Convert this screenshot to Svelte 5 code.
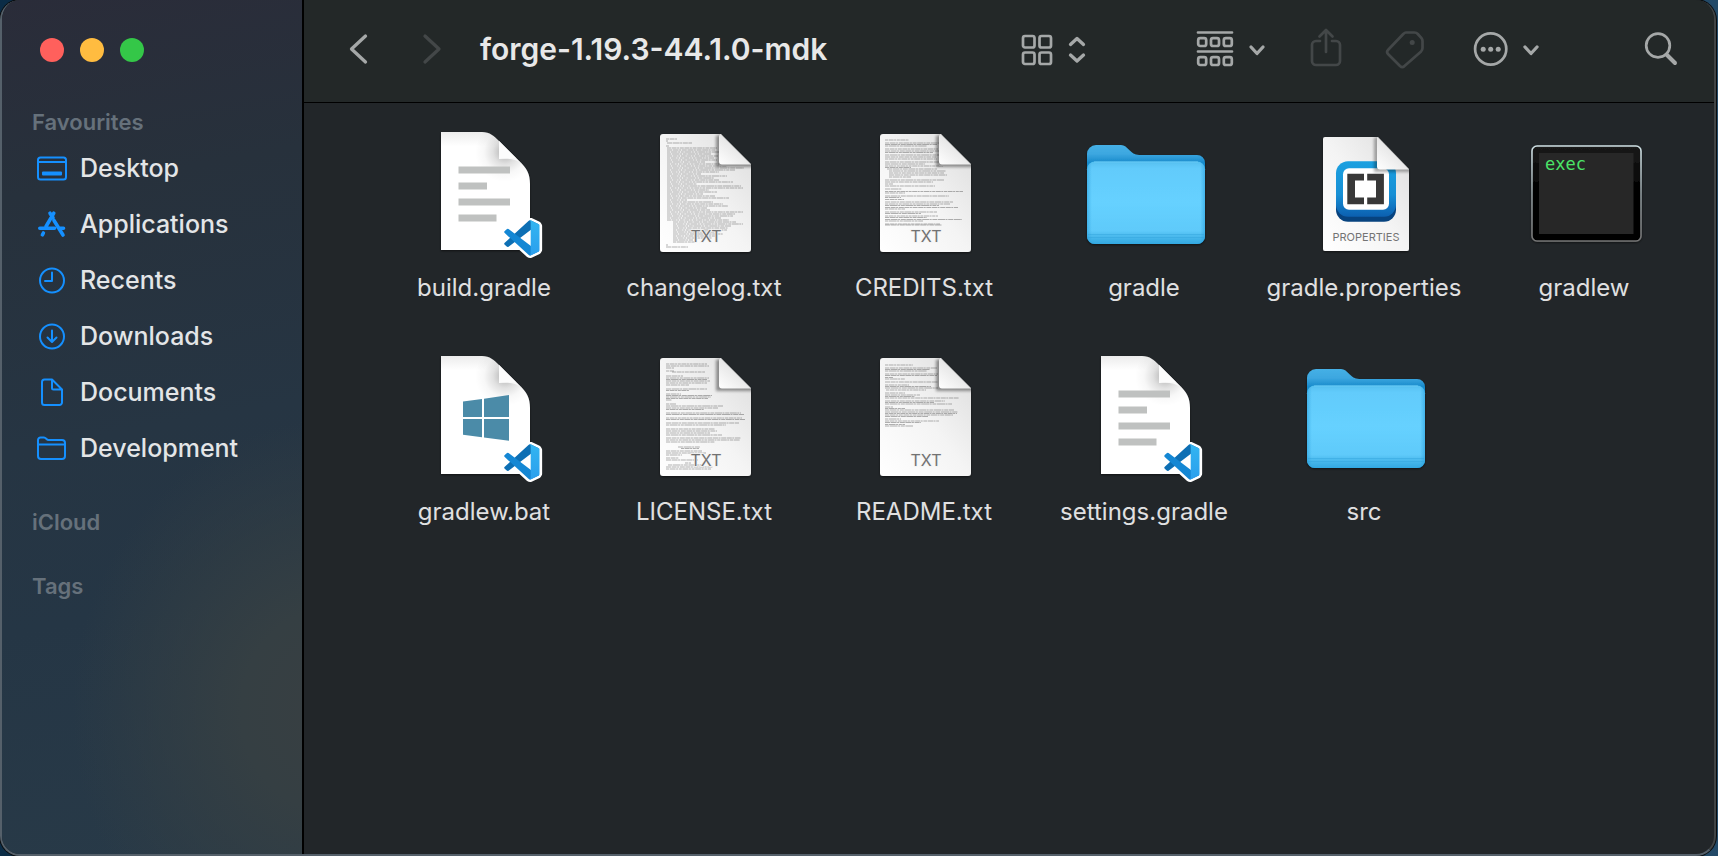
<script>
  const places = [
    { name: 'Desktop', icon: 'desktop' },
    { name: 'Applications', icon: 'apps' },
    { name: 'Recents', icon: 'clock' },
    { name: 'Downloads', icon: 'download' },
    { name: 'Documents', icon: 'doc' },
    { name: 'Development', icon: 'folder' }
  ];

  // Rows of miniature text on a page preview: [y, x, width], in icon units
  const changelog = [
    [11, 26, 11], [13, 26, 2], [15, 27, 25], [18, 26, 3],
    ...Array.from({ length: 25 }, (_, i) => [20 + i * 2, 27, [50, 48, 52, 44, 51, 47, 50, 38, 52, 60, 77, 68, 52, 34, 60, 47, 52, 66, 30, 74, 76, 42, 50, 36, 48][i]]),
    ...Array.from({ length: 12 }, (_, i) => [70 + i * 2, 27, [62, 20, 46, 56, 61, 40, 43, 76, 68, 66, 54, 62][i]]),
    ...Array.from({ length: 11 }, (_, i) => [94 + i * 2, 33, [63, 70, 58, 55, 54, 42, 50, 42, 39, 20, 22][i]]),
    [117, 26, 2], [119, 26, 22]
  ];
  const credits = [
    [12, 25, 24], [15, 25, 54], [16.5, 25, 52], [18, 25, 42], [21, 25, 53], [23, 25, 54], [24.5, 25, 48],
    [27, 25, 54], [29, 25, 51], [31, 25, 52], [34, 25, 54], [36, 25, 40], [38, 25, 58], [39.5, 25, 26], [41, 27, 50],
    [43, 29, 57], [45, 29, 55], [47, 29, 58], [49, 29, 22], [52, 25, 59], [54, 25, 48], [56, 25, 8], [58, 25, 50],
    [61, 25, 17], [63.5, 25, 78], [65, 25, 20], [68, 25, 64], [69.5, 25, 16], [71.5, 25, 19],
    [74, 25, 68], [76, 25, 65], [77.5, 25, 54], [79.5, 25, 73], [81, 25, 20], [84, 25, 52], [85.5, 25, 36],
    [88, 25, 53], [89.5, 25, 42], [91.5, 25, 77], [93, 25, 38], [96, 25, 55], [97, 25, 57]
  ];
  const license = [
    [12, 26, 41], [14, 26, 43], [16, 26, 8], [19, 26, 8], [20, 32, 33], [24, 26, 17], [26, 26, 43], [27.5, 26, 41],
    [29, 26, 44], [31, 26, 41], [33, 26, 23], [37, 26, 41], [38.5, 26, 23], [42, 26, 15], [43.5, 26, 46], [45, 26, 45],
    [46.5, 26, 42], [48, 26, 6], [52, 26, 10], [54, 26, 57], [56, 26, 52], [57.5, 26, 38], [61, 26, 75], [62.5, 26, 78],
    [66, 26, 76], [67.5, 26, 79], [71, 26, 73], [73, 26, 60], [77, 26, 49], [79, 26, 51], [81, 26, 44], [83, 26, 56],
    [86, 26, 75], [88, 26, 74], [90, 26, 49], [95, 38, 22], [96.5, 41, 18], [99, 26, 36], [101, 26, 40], [103, 26, 16],
    [106, 26, 13], [108, 26, 32], [111, 45, 6], [113, 28, 34], [115, 26, 47], [117, 26, 45]
  ];
  const readme = [
    [13, 25, 28], [16, 25, 52], [17.5, 25, 45], [19, 25, 42], [22, 25, 53], [23.5, 25, 52], [25.5, 25, 8], [27, 25, 20],
    [30, 25, 53], [33, 25, 24], [34.5, 25, 46], [36, 25, 53], [38, 26, 40], [41, 25, 20], [43, 25, 35], [44.5, 25, 30],
    [46, 25, 74], [49, 25, 60], [50.5, 25, 49], [52, 25, 67], [55, 25, 8], [56.5, 25, 20], [58, 25, 69], [60, 25, 73],
    [61.5, 25, 72], [63, 25, 68], [64.5, 25, 43], [67, 25, 16], [69, 25, 54], [70.5, 25, 36], [72.5, 25, 20], [74, 25, 28]
  ];

  const files = [
    { name: 'build.gradle', kind: 'code' },
    { name: 'changelog.txt', kind: 'txt', rows: changelog },
    { name: 'CREDITS.txt', kind: 'txt', rows: credits },
    { name: 'gradle', kind: 'folder' },
    { name: 'gradle.properties', kind: 'properties' },
    { name: 'gradlew', kind: 'exec' },
    { name: 'gradlew.bat', kind: 'windows' },
    { name: 'LICENSE.txt', kind: 'txt', rows: license },
    { name: 'README.txt', kind: 'txt', rows: readme },
    { name: 'settings.gradle', kind: 'code' },
    { name: 'src', kind: 'folder' }
  ];
</script>

<svelte:head><title>forge-1.19.3-44.1.0-mdk</title></svelte:head>

<svg class="defs" aria-hidden="true">
  <defs>
    <linearGradient id="paper" x1="0" y1="1" x2="1" y2="0"><stop offset="0" stop-color="#fff" /><stop offset=".5" stop-color="#f4f4f4" /><stop offset="1" stop-color="#dcdcdc" /></linearGradient>
    <linearGradient id="flap" x1="0" y1="1" x2=".6" y2=".3"><stop offset="0" stop-color="#fff" /><stop offset="1" stop-color="#e2e2e2" /></linearGradient>
    <linearGradient id="sheet" x1="0" y1="0" x2="0" y2="1"><stop offset="0" stop-color="#ececec" /><stop offset=".12" stop-color="#fff" /><stop offset="1" stop-color="#fff" /></linearGradient>
    <radialGradient id="curl" gradientUnits="userSpaceOnUse" cx="85" cy="24" r="30"><stop offset="0" stop-color="#000" stop-opacity=".32" /><stop offset=".4" stop-color="#000" stop-opacity=".12" /><stop offset=".7" stop-color="#000" stop-opacity=".03" /><stop offset="1" stop-color="#000" stop-opacity="0" /></radialGradient>
    <linearGradient id="folder-back" x1="0" y1="0" x2="0" y2="1"><stop offset="0" stop-color="#45b0e6" /><stop offset=".09" stop-color="#3da7e0" /><stop offset=".18" stop-color="#168acb" /><stop offset="1" stop-color="#168acb" /></linearGradient>
    <linearGradient id="folder-front" x1="0" y1="0" x2="0" y2="1"><stop offset="0" stop-color="#55bfef" /><stop offset=".08" stop-color="#62cbfb" /><stop offset=".5" stop-color="#66d1ff" /><stop offset=".84" stop-color="#5fcafa" /><stop offset=".9" stop-color="#4dbbee" /><stop offset="1" stop-color="#32a8e1" /></linearGradient>
    <linearGradient id="folder-edge"><stop offset="0" stop-color="#279ddb" stop-opacity=".55" /><stop offset=".04" stop-color="#279ddb" stop-opacity="0" /><stop offset=".96" stop-color="#279ddb" stop-opacity="0" /><stop offset="1" stop-color="#279ddb" stop-opacity=".55" /></linearGradient>
    <linearGradient id="brackets" x1="0" y1="0" x2="0" y2="1"><stop offset="0" stop-color="#1ba0e0" /><stop offset=".6" stop-color="#178fd5" /><stop offset="1" stop-color="#0b5fb0" /></linearGradient>
    <linearGradient id="rim" x1="0" y1="0" x2="0" y2="1"><stop offset="0" stop-color="#cfe0e4" /><stop offset=".5" stop-color="#8d979a" /><stop offset="1" stop-color="#747474" /></linearGradient>
    <linearGradient id="bezel" x1="0" y1="0" x2="0" y2="1"><stop offset="0" stop-color="#1b1b1b" /><stop offset=".5" stop-color="#000" /><stop offset="1" stop-color="#000" /></linearGradient>
    <linearGradient id="code-right" x1="0" y1="0" x2="0" y2="1"><stop offset="0" stop-color="#32b5f1" /><stop offset="1" stop-color="#2b9fed" /></linearGradient>
    <filter id="drop" x="-10%" y="-10%" width="120%" height="125%"><feDropShadow dx="0" dy="1" stdDeviation="1.2" flood-color="#000" flood-opacity=".55" /></filter>
    <filter id="soft" x="-30%" y="-30%" width="160%" height="160%"><feGaussianBlur stdDeviation="1.6" /></filter>
    <clipPath id="txt-clip"><path d="M23 6h58l30 30v85a3 3 0 0 1-3 3H23a3 3 0 0 1-3-3V9a3 3 0 0 1 3-3z" /></clipPath>
    <clipPath id="text-area"><path d="M20 6H79V38H111V124H20z" /></clipPath>
    <clipPath id="prop-clip"><path d="M25 9h53l31 32v80a2 2 0 0 1-2 2H25a2 2 0 0 1-2-2V11a2 2 0 0 1 2-2z" /></clipPath>
  </defs>
</svg>

{#snippet chevronDown()}
  <svg width="20" height="44" viewBox="0 0 20 44"><path class="heavy" d="M4 20l6 6.5 6-6.5" /></svg>
{/snippet}

{#snippet vscodeBadge()}
  <g transform="translate(84.3 92.3) scale(.352)">
    <path d="M97 11L76 1Q72 0 69 2L1 64Q0 67 1 70L7 75 12 75 75 27V73L12 25 7 25 1 30Q0 34 1 36L69 98Q72 100 76 99L97 89 100 84V16z" fill="#fff" stroke="#fff" stroke-width="15" stroke-linejoin="round" />
    <path d="M96.46 10.8L75.86.88a6.2 6.2 0 0 0-7.11 1.2L1.3 63.58a4.2 4.2 0 0 0 0 6.17l5.51 5a4.2 4.2 0 0 0 5.32.24L93.36 13.37C96.09 11.3 100 13.25 100 16.67v-.24c0-2.4-1.38-4.59-3.54-5.63z" fill="#0d6fb4" />
    <path d="M96.46 89.2l-20.6 9.92a6.2 6.2 0 0 1-7.11-1.2L1.3 36.42a4.2 4.2 0 0 1 0-6.17l5.51-5a4.2 4.2 0 0 1 5.32-.24l81.23 61.62C96.09 88.7 100 86.75 100 83.33v.24c0 2.4-1.38 4.59-3.54 5.63z" fill="#1487d4" />
    <path d="M75.86 99.13a6.2 6.2 0 0 1-7.11-1.21C71.06 100.22 75 98.59 75 95.33V4.67c0-3.26-3.94-4.89-6.25-2.59a6.2 6.2 0 0 1 7.11-1.21l20.6 9.91A6.2 6.2 0 0 1 100 16.41v67.18c0 2.4-1.38 4.59-3.54 5.63z" fill="url(#code-right)" />
  </g>
{/snippet}

{#snippet curledSheet()}
  <path d="M21 4H62C70 4 74 8 79 13L99 33C107 40 110 46 110 56V122H21z" fill="url(#sheet)" filter="url(#drop)" />
  <path d="M21 4H62C70 4 74 8 79 13L99 33C107 40 110 46 110 56V70H21z" fill="url(#curl)" />
  <path d="M79 13V31C88 30 95 31 101 35z" fill="#f8f8f8" />
  <path d="M79 13V31L96 30z" fill="#fff" opacity=".6" />
{/snippet}

<div class="desktop">
  <div class="window">
    <aside>
      <div class="lights">
        <button class="close" aria-label="Close"></button>
        <button class="minimise" aria-label="Minimise"></button>
        <button class="zoom" aria-label="Zoom"></button>
      </div>
      <h2>Favourites</h2>
      <nav>
        {#each places as place}
          <a href="#{place.icon}">
            <svg width="32" height="32" viewBox="0 0 32 32" aria-hidden="true">
              {#if place.icon === 'desktop'}
                <rect x="4" y="5" width="28" height="22" rx="2.5" transform="translate(-2 0.500)" /><path d="M2 10h28" /><rect class="solid" x="6" y="19.500" width="20" height="4" rx="1" />
              {:else if place.icon === 'apps'}
                <path class="thick" d="M17.8 5.2L10 18.5M14 5.2l3 4.5M18 12.5l9 14.5M3.8 20.3H18.5M23 20.3H27.5M7.4 25l-1 1.8" />
              {:else if place.icon === 'clock'}
                <circle cx="16" cy="16.500" r="12" /><path d="M16 8.500v8.500H9" />
              {:else if place.icon === 'download'}
                <circle cx="16" cy="16.500" r="12" /><path d="M16 10.500v11M11.500 17.500l4.500 4.500 4.500-4.500" />
              {:else if place.icon === 'doc'}
                <path d="M8.500 3.500H16l10 10v13a2.500 2.500 0 0 1-2.500 2.500H8.500A2.500 2.500 0 0 1 6 26.500V6A2.500 2.500 0 0 1 8.500 3.500zM16 3.500v8.500a1.500 1.500 0 0 0 1.500 1.500H26" />
              {:else}
                <path d="M2 12.500h27M4.500 5.500H8c2 0 2.500 2.500 4.500 2.500H26a3 3 0 0 1 3 3V24a3 3 0 0 1-3 3H5a3 3 0 0 1-3-3V8A2.500 2.500 0 0 1 4.500 5.500z" />
              {/if}
            </svg>
            {place.name}
          </a>
        {/each}
      </nav>
      <h2>iCloud</h2>
      <h2>Tags</h2>
    </aside>

    <main>
      <header>
        <button aria-label="Back"><svg width="32" height="44" viewBox="0 0 32 44"><path class="heavy" d="M23.500 9L9.500 22l14 13" /></svg></button>
        <button class="forward" aria-label="Forward" disabled><svg width="32" height="44" viewBox="0 0 32 44"><path class="heavy" d="M9 9l14 13L9 35" /></svg></button>
        <h1>forge-1.19.3-44.1.0-mdk</h1>
        <div class="tools">
          <button class="view" aria-label="View as icons">
            <svg width="32" height="44" viewBox="0 0 32 44"><rect x="2" y="9" width="11.500" height="11.500" rx="2" /><rect x="18.500" y="9" width="11.500" height="11.500" rx="2" /><rect x="2" y="25.500" width="11.500" height="11.500" rx="2" /><rect x="18.500" y="25.500" width="11.500" height="11.500" rx="2" /></svg>
            <svg width="20" height="44" viewBox="0 0 20 44"><path class="heavy" d="M3.500 17.500L10 11.500l6.500 6M3.500 28l6.500 6 6.500-6" /></svg>
          </button>
          <button class="group" aria-label="Group items">
            <svg width="40" height="44" viewBox="0 0 40 44">
              <path d="M3 5.500h34M3 24.500h34" />
              {#each [3.2, 16, 28.8] as x}<rect {x} y="11.200" width="8" height="7.800" rx="2" /><rect {x} y="30.200" width="8" height="7.800" rx="2" />{/each}
            </svg>
            {@render chevronDown()}
          </button>
          <button aria-label="Share" disabled><svg width="34" height="44" viewBox="0 0 34 44"><path d="M11 14H7a4 4 0 0 0-4 4v16a4 4 0 0 0 4 4h20a4 4 0 0 0 4-4V18a4 4 0 0 0-4-4h-4M17 25V3.500M10.500 9.500L17 3l6.500 6.500" /></svg></button>
          <button aria-label="Edit tags" disabled><svg width="40" height="44" viewBox="0 0 40 44"><path d="M21 5.500h8.500q2 0 3.300 1.500l3.700 4.200q1 1.200 1 2.800v7q0 2-1.400 3.400L19.500 39q-2.200 2.200-4.500 0L3 27q-2-2 0-4L18.500 6.800Q19.600 5.500 21 5.500z" /><circle class="dot" cx="27.200" cy="15.500" r="2.500" /></svg></button>
          <button class="more" aria-label="More actions">
            <svg width="36" height="44" viewBox="0 0 36 44"><circle cx="17.700" cy="22" r="15.600" /><circle class="dot" cx="10.200" cy="22.300" r="2.500" /><circle class="dot" cx="17.700" cy="22.300" r="2.500" /><circle class="dot" cx="25.200" cy="22.300" r="2.500" /></svg>
            {@render chevronDown()}
          </button>
          <button class="search" aria-label="Search"><svg width="36" height="44" viewBox="0 0 36 44"><circle cx="15" cy="18.500" r="11.800" /><path class="handle" d="M23.500 27.500l8.500 8.500" /></svg></button>
        </div>
      </header>

      <ul>
        {#each files as file}
          <li>
            <svg width="128" height="128" viewBox="0 0 128 128" aria-hidden="true">
              {#if file.kind === 'code'}
                {@render curledSheet()}
                <path d="M38.500 38.500h51.500v7H38.500zM38.500 54.500H67v7H38.500zM38.500 70.500h51.500v7H38.500zM38.500 86.500h38v7h-38z" fill="#bfc1c0" />
                {@render vscodeBadge()}
              {:else if file.kind === 'windows'}
                {@render curledSheet()}
                <path d="M43 49.500L62 47V65H43zM64 46.700L89 43V65H64zM43 67H62V85.200L43 82.700zM64 67H89V88.700L64 85.400z" fill="#4b8ba8" />
                {@render vscodeBadge()}
              {:else if file.kind === 'txt'}
                <path d="M23 6h58l30 30v85a3 3 0 0 1-3 3H23a3 3 0 0 1-3-3V9a3 3 0 0 1 3-3z" fill="url(#paper)" filter="url(#drop)" />
                <g clip-path="url(#text-area)">
                  {#each file.rows as [y, x, w], i}
                    <path d="M{x} {y}h{w}" fill="none" stroke="#4a4a4a" stroke-opacity=".42" stroke-width="1" stroke-dasharray="{3 + (i % 3)} .6 {5 + (i % 4)} .5 2 .7" />
                  {/each}
                </g>
                <g clip-path="url(#txt-clip)"><path d="M76 8V39H114V36L84 6z" fill="#000" opacity=".4" filter="url(#soft)" /></g>
                <path d="M80.500 6L111 36.500H82a3 3 0 0 1-3-3V7.500z" fill="url(#flap)" />
                <text x="66" y="114" font-size="16" fill="#727272" stroke="#f3f3f3" stroke-width="1.500" paint-order="stroke">TXT</text>
              {:else if file.kind === 'folder'}
                <g filter="url(#drop)">
                  <path d="M7 26a9 9 0 0 1 9-9H41c7 0 9 10 18 10H117a8 8 0 0 1 8 8V108a8 8 0 0 1-8 8H15a8 8 0 0 1-8-8z" fill="url(#folder-back)" />
                  <rect x="7" y="33.500" width="118" height="82.500" rx="8" fill="url(#folder-front)" />
                  <rect x="7" y="33.500" width="118" height="82.500" rx="8" fill="url(#folder-edge)" />
                  <path d="M14 33.900H118" stroke="#7ad5fb" stroke-width=".8" opacity=".7" />
                  <path d="M8 106.500H124M8 109.500H124" stroke="#2c9fd8" stroke-width=".8" opacity=".5" />
                </g>
              {:else if file.kind === 'properties'}
                <path d="M25 9h53l31 32v80a2 2 0 0 1-2 2H25a2 2 0 0 1-2-2V11a2 2 0 0 1 2-2z" fill="url(#paper)" filter="url(#drop)" />
                <rect x="36" y="37" width="60" height="56.700" rx="12" fill="#07437f" />
                <rect x="36" y="33.300" width="60" height="55.500" rx="12" fill="url(#brackets)" />
                <rect x="43" y="40.300" width="46" height="41.500" rx="6" fill="#fff" />
                <path d="M47.300 45.700H64V52.500H55V69.500H64V76.300H47.300zM83.900 45.700H67.200V52.500H76V69.500H67.200V76.300H83.900z" fill="#383838" />
                <g clip-path="url(#prop-clip)"><path d="M74 10V44H112V40L80 8z" fill="#000" opacity=".32" filter="url(#soft)" /></g>
                <path d="M77.500 9L109 41.500H80a3 3 0 0 1-3-3V10z" fill="url(#flap)" />
                <text x="66" y="113" font-size="11" fill="#747474">PROPERTIES</text>
              {:else}
                <rect x="12" y="18" width="109" height="95" rx="5" fill="url(#bezel)" stroke="url(#rim)" stroke-width="1.600" filter="url(#drop)" />
                <rect x="19" y="25" width="94.500" height="81" fill="#272727" />
                <text class="mono" x="25" y="42" font-size="17" fill="#4be468">exec</text>
              {/if}
            </svg>
            <span>{file.name}</span>
          </li>
        {/each}
      </ul>
    </main>
  </div>
</div>

<style>
  :global(body) {
    margin: 0;
    background: #0a2f4c;
  }

  .defs {
    position: absolute;
    width: 0;
    height: 0;
  }

  .desktop {
    box-sizing: border-box;
    min-height: 100vh;
    display: flex;
    padding-right: 2px;
    background: linear-gradient(90deg, #0b2c46, #234a68);
    font-family: Inter, 'Liberation Sans', sans-serif;
    color: #e3e4e5;
  }

  .window {
    flex: 1;
    display: flex;
    overflow: hidden;
    border: solid #55606a;
    border-width: 0 2px 2px;
    border-right-color: #414445;
    border-radius: 20px;
    background: #222629;
    box-shadow: 0 0 0 1px #0a0d0f;
  }

  aside {
    flex: none;
    width: 300px;
    border-right: 2px solid #000;
    background:
      radial-gradient(ellipse 260px 290px at 330px 710px, #383f42, #353f43 35%, #2b3b4600),
      linear-gradient(170deg, #2a2c39, #27313c 22%, #263543 50%, #253645 70%, #283a48);
  }

  .lights {
    display: flex;
    gap: 16px;
    padding: 38px 38px 42px;
  }

  .lights button {
    width: 24px;
    height: 24px;
    border-radius: 50%;
  }

  .close { background: #ff605c; }
  .minimise { background: #ffbc40; }
  .zoom { background: #34c748; }

  button {
    display: flex;
    padding: 0;
    border: 0;
    background: none;
    color: #a5a8a8;
  }

  button:disabled { color: #434748; }

  h2 {
    margin: 0;
    padding: 4px 30px;
    font-size: 22px;
    line-height: 28px;
    font-weight: 600;
    color: #66717b;
  }

  nav {
    display: flex;
    flex-direction: column;
    margin-bottom: 28px;
  }

  nav a {
    display: flex;
    align-items: center;
    gap: 12px;
    height: 56px;
    padding-left: 34px;
    font-size: 25px;
    font-weight: 500;
    color: #e3e5e7;
    text-decoration: none;
  }

  nav svg {
    fill: none;
    stroke: #1590ff;
    stroke-width: 2;
    stroke-linecap: round;
    stroke-linejoin: round;
  }

  nav .solid {
    fill: #1590ff;
    stroke: none;
  }

  nav .thick { stroke-width: 3.6; }

  h2 + h2 { margin-top: 28px; }

  main {
    flex: 1;
    min-width: 0;
  }

  header {
    display: flex;
    align-items: center;
    padding: 27px 35px 31px 38px;
    border-bottom: 1px solid #000;
    background: #232828;
  }

  .forward { margin: 0 32px 0 42px; }

  h1 {
    flex: 1;
    margin: 0;
    font-size: 30px;
    line-height: 44px;
    font-weight: 600;
    color: #e8e8e8;
    white-space: nowrap;
  }

  .tools {
    display: flex;
    gap: 42px;
  }

  .view { gap: 14px; margin-right: 66px; }
  .group, .more { gap: 12px; }
  .more { margin-left: 6px; }
  .search { margin-left: 60px; }

  header svg {
    fill: none;
    stroke: currentColor;
    stroke-width: 2.7;
    stroke-linecap: round;
    stroke-linejoin: round;
  }

  header .heavy { stroke-width: 3.3; }
  header .handle { stroke-width: 4; }

  header .dot {
    fill: currentColor;
    stroke: none;
  }

  ul {
    display: grid;
    grid-template-columns: repeat(auto-fill, 220px);
    row-gap: 32px;
    margin: 0;
    padding: 25px 20px 32px 70px;
    list-style: none;
  }

  li {
    display: flex;
    flex-direction: column;
    align-items: center;
    gap: 16px;
  }

  li svg { overflow: visible; }

  li text {
    font-family: Inter, sans-serif;
    text-anchor: middle;
  }

  li text.mono {
    font-family: 'DejaVu Sans Mono', monospace;
    text-anchor: start;
  }

  li span {
    font-size: 24px;
    line-height: 32px;
    height: 48px;
    color: #e0e0e1;
    white-space: nowrap;
  }
</style>
